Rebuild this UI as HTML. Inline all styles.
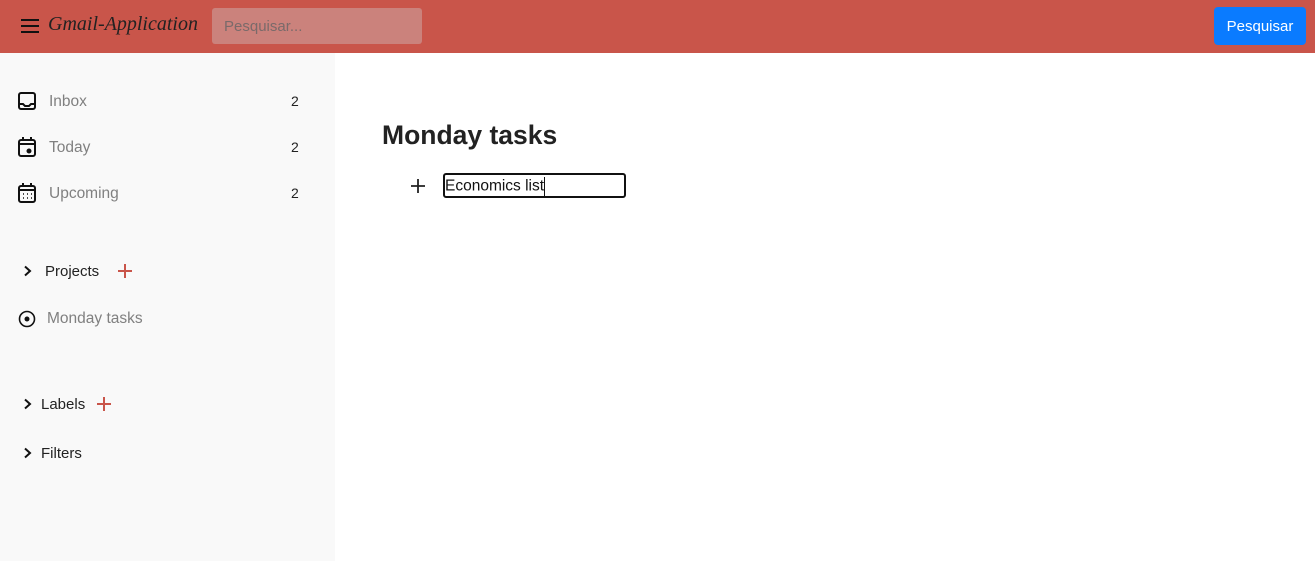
<!DOCTYPE html>
<html><head><style>
*{box-sizing:border-box;margin:0;padding:0}
body{width:1315px;height:561px;overflow:hidden;font-family:"Liberation Sans",sans-serif;background:#fff;position:relative}
.top{position:absolute;left:0;top:0;width:1315px;height:53px;background:#c9554a}
.side{position:absolute;left:0;top:53px;width:335px;height:508px;background:#f9f9f9}
.t{position:absolute;white-space:nowrap;line-height:1.15}
.g{color:#808080;font-size:15.5px}
.n{font-size:14px;color:#222}
</style></head><body>
<div class="top">
 <div class="t" style="left:21px;top:19px;width:18px;height:2px;background:#111;box-shadow:0 6px 0 #111,0 12px 0 #111"></div>
 <div class="t" style="left:48px;top:13px;font-size:20px;color:#222;font-family:'Liberation Serif',cursive;font-style:italic;letter-spacing:0px">Gmail-Application</div>
 <div class="t" style="left:212px;top:8px;width:210px;height:36px;background:#cb827c;border-radius:3px;color:#7a6a6a;font-size:15px;padding:10px 12px 0">Pesquisar...</div>
 <div class="t" style="left:1214px;top:7px;width:92px;height:38px;background:#0a7bff;border-radius:4px;color:#fff;font-size:15px;text-align:center;padding-top:11px">Pesquisar</div>
</div>
<div class="side">
 <svg class="t" style="left:17px;top:38px" width="20" height="20" viewBox="0 0 20 20" fill="none" stroke="#111" stroke-width="2"><rect x="2" y="2" width="16" height="16" rx="2"/><path d="M2 13h4l2 2h4l2-2h4"/></svg>
 <div class="t g" style="left:49px;top:40px">Inbox</div><div class="t n" style="left:291px;top:40px">2</div>
 <svg class="t" style="left:17px;top:83px" width="20" height="22" viewBox="0 0 20 22" fill="none" stroke="#111" stroke-width="2"><rect x="2" y="4" width="16" height="16" rx="2"/><path d="M2 8h16M6 1v4M14 1v4"/><circle cx="12" cy="15" r="1.5" fill="#111"/></svg>
 <div class="t g" style="left:49px;top:86px">Today</div><div class="t n" style="left:291px;top:86px">2</div>
 <svg class="t" style="left:17px;top:129px" width="20" height="22" viewBox="0 0 20 22" fill="none" stroke="#111" stroke-width="2"><rect x="2" y="4" width="16" height="16" rx="2"/><path d="M2 8h16M6 1v4M14 1v4"/><path d="M6 12h1M10 12h1M14 12h1M6 16h1M10 16h1M14 16h1" stroke-width="1.5"/></svg>
 <div class="t g" style="left:49px;top:132px">Upcoming</div><div class="t n" style="left:291px;top:132px">2</div>
 <svg class="t" style="left:23px;top:212px" width="10" height="12" viewBox="0 0 10 12"><path d="M2 1.5l5 4.5-5 4.5" fill="none" stroke="#111" stroke-width="2"/></svg>
 <div class="t" style="left:45px;top:210px;font-size:15px;color:#222">Projects</div>
 <svg class="t" style="left:117px;top:210px" width="16" height="16" viewBox="0 0 16 16"><path d="M8 1v14M1 8h14" stroke="#c9554a" stroke-width="2"/></svg>
 <svg class="t" style="left:18px;top:257px" width="18" height="18" viewBox="0 0 18 18"><circle cx="9" cy="9" r="7.5" fill="none" stroke="#111" stroke-width="1.6"/><circle cx="9" cy="9" r="2.5" fill="#111"/></svg>
 <div class="t g" style="left:47px;top:257px">Monday tasks</div>
 <svg class="t" style="left:23px;top:345px" width="10" height="12" viewBox="0 0 10 12"><path d="M2 1.5l5 4.5-5 4.5" fill="none" stroke="#111" stroke-width="2"/></svg>
 <div class="t" style="left:41px;top:343px;font-size:15px;color:#222">Labels</div>
 <svg class="t" style="left:96px;top:343px" width="16" height="16" viewBox="0 0 16 16"><path d="M8 1v14M1 8h14" stroke="#c9554a" stroke-width="2"/></svg>
 <svg class="t" style="left:23px;top:394px" width="10" height="12" viewBox="0 0 10 12"><path d="M2 1.5l5 4.5-5 4.5" fill="none" stroke="#111" stroke-width="2"/></svg>
 <div class="t" style="left:41px;top:392px;font-size:15px;color:#222">Filters</div>
</div>
<div class="t" style="left:382px;top:120px;font-size:26.5px;font-weight:bold;color:#222">Monday tasks</div>
<svg class="t" style="left:410px;top:178px" width="16" height="16" viewBox="0 0 16 16"><path d="M8 1v14M1 8h14" stroke="#222" stroke-width="1.8"/></svg>
<div class="t" style="left:443px;top:173px;width:183px;height:25px;border:2px solid #111;border-radius:3px;font-size:15.5px;color:#111;padding:2px 0 0 0">Economics list<span style="display:inline-block;width:1px;height:19px;background:#111;vertical-align:middle"></span></div>
</body></html>
